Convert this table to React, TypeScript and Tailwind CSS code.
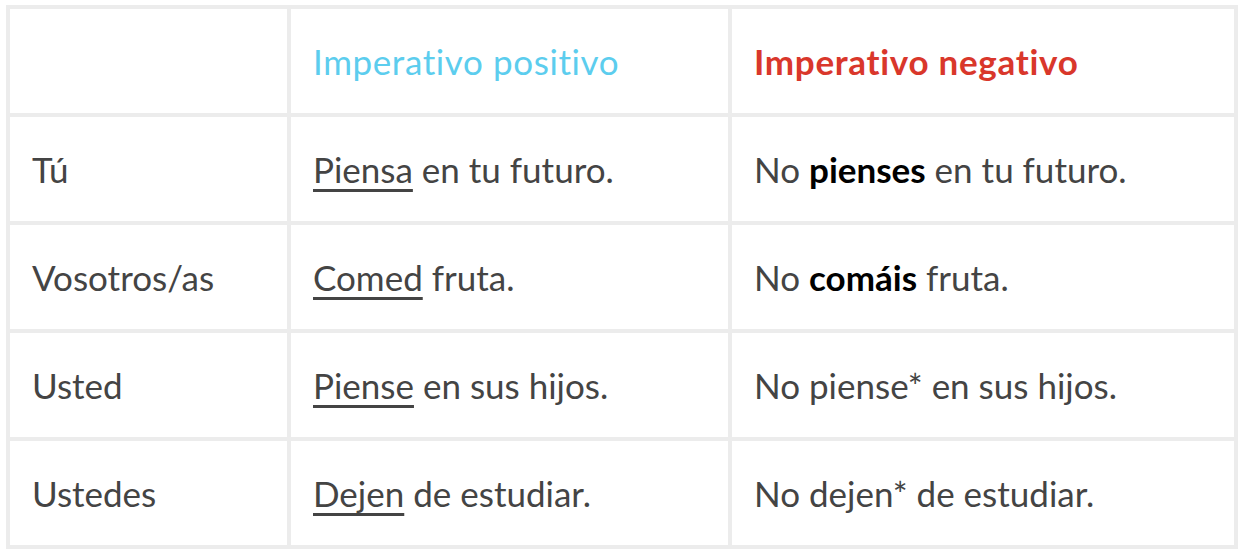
const rows = [
  {
    who: "Tú",
    pos: ["Piensa", " en tu futuro."],
    neg: ["No ", "pienses", " en tu futuro."],
  },
  {
    who: "Vosotros/as",
    pos: ["Comed", " fruta."],
    neg: ["No ", "comáis", " fruta."],
  },
  {
    who: "Usted",
    pos: ["Piense", " en sus hijos."],
    neg: ["No piense* en sus hijos.", "", ""],
  },
  {
    who: "Ustedes",
    pos: ["Dejen", " de estudiar."],
    neg: ["No dejen* de estudiar.", "", ""],
  },
];

const cell = "border-4 border-[#ececec] px-[22px] h-[108px] align-middle";

export default function App() {
  return (
    <div className="w-[1242px] h-[556px] bg-white pt-[5px] pl-[6px] font-['Lato',sans-serif] text-[35px] text-[#444444]">
      <table className="border-collapse w-[1232px] table-fixed">
        <colgroup>
          <col className="w-[281px]" />
          <col className="w-[441px]" />
          <col />
        </colgroup>
        <thead>
          <tr>
            <th className={cell}></th>
            <th className={`${cell} text-left font-normal tracking-[0.6px] text-[#5ccdee]`}>Imperativo positivo</th>
            <th className={`${cell} text-left font-bold tracking-[0.7px] text-[#d9372b]`}>Imperativo negativo</th>
          </tr>
        </thead>
        <tbody>
          {rows.map((r) => (
            <tr key={r.who}>
              <td className={cell}>{r.who}</td>
              <td className={cell}>
                <span className="underline decoration-[2.5px] underline-offset-[6px] [text-decoration-skip-ink:none]">{r.pos[0]}</span>
                {r.pos[1]}
              </td>
              <td className={cell}>
                {r.neg[0]}
                {r.neg[1] && <b className="font-bold text-black">{r.neg[1]}</b>}
                {r.neg[2]}
              </td>
            </tr>
          ))}
        </tbody>
      </table>
    </div>
  );
}
